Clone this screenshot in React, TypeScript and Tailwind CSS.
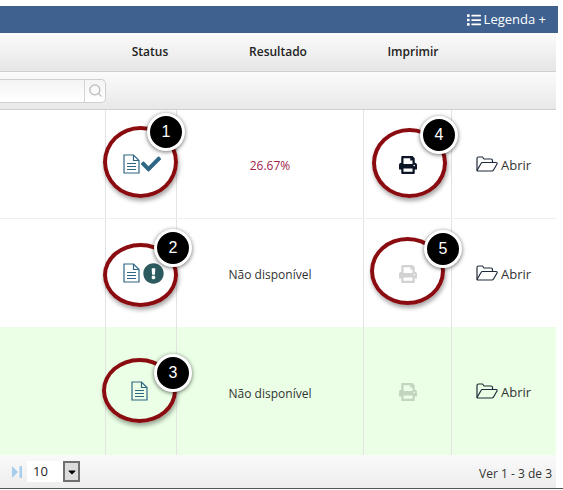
import { FaCheck, FaExclamationCircle, FaList, FaPrint, FaCaretDown } from 'react-icons/fa'
import { Search } from 'lucide-react'

function DocIcon({ className }: { className?: string }) {
  return (
    <svg viewBox="0 0 17 20" className={className} fill="none" stroke="currentColor" strokeWidth="1.2">
      <path d="M1 1h9.5L16 6.5V19H1z" />
      <path d="M10.5 1v5.5H16" />
      <path d="M4 9.5h9M4 12.5h9M4 15.5h9" />
    </svg>
  )
}

function FolderIcon({ className }: { className?: string }) {
  return (
    <svg viewBox="0 0 22 16" className={className} fill="none" stroke="currentColor" strokeWidth="1.2" strokeLinejoin="round">
      <path d="M1 14.5V2.5Q1 1 2.5 1h4l1.5 2h7Q16.5 3 16.5 4.5V6.5" />
      <path d="M1 14.5L5 7.5Q5.5 6.5 6.5 6.5H20Q21.5 6.5 21 8L17.5 14Q17 15 16 15H1.5z" />
    </svg>
  )
}

function Ring({ className }: { className: string }) {
  return (
    <div
      className={`absolute rounded-[50%] border-[4px] border-[#8a0c10] shadow-[1px_3px_4px_rgba(0,0,0,0.35)] ${className}`}
    />
  )
}

function Badge({ n, className }: { n: number; className: string }) {
  return (
    <div
      className={`absolute flex h-[38px] w-[38px] items-center justify-center rounded-full border-[3px] border-white bg-black font-['Liberation_Sans',sans-serif] text-[16px] text-white shadow-[0_1px_4px_rgba(0,0,0,0.6)] ${className}`}
    >
      {n}
    </div>
  )
}

function Row({
  status,
  result,
  printClass,
  className,
  resultClass = 'pt-[3px]',
}: {
  status: React.ReactNode
  result: React.ReactNode
  printClass: string
  className: string
  resultClass?: string
}) {
  return (
    <div className={`grid grid-cols-[105px_72px_186px_89px_1fr] ${className}`}>
      <div />
      <div className="flex items-center border-x border-[#e3e3e3] pl-[17px]">{status}</div>
      <div className={`flex items-center justify-center ${resultClass}`}>{result}</div>
      <div className="flex items-center justify-center border-x border-[#e3e3e3] pt-[2px]">
        <FaPrint className={`text-[18px] ${printClass}`} />
      </div>
      <div className="flex items-center gap-[3px] pl-[24px] text-[13px] text-[#333]">
        <FolderIcon className="h-[16px] w-[22px] text-[#1f2a3a]" />
        <span className="mt-[4px]">Abrir</span>
      </div>
    </div>
  )
}

export default function App() {
  return (
    <div className="relative h-[490px] w-[563px] overflow-hidden bg-white pt-[6px] font-['Open_Sans',sans-serif] text-[12px]">
      <div className="flex h-[27px] w-[558px] items-center justify-end bg-[#3e618f] pr-[12px] text-[13px] text-white">
        <FaList className="mr-[3px] text-[14px]" />
        <span className="mt-[1px]">Legenda +</span>
      </div>

      <div className="w-[556px]">
        <div className="grid h-[39px] grid-cols-[115px_70px_186px_84px_1fr] items-center border-b border-[#cfcfcf] bg-gradient-to-b from-[#fbfbfb] to-[#e6e6e6] font-semibold text-[#222]">
          <div />
          <div className="text-center">Status</div>
          <div className="text-center">Resultado</div>
          <div className="text-center">Imprimir</div>
          <div />
        </div>

        <div className="flex h-[38px] items-center border-b border-[#cfcfcf] bg-gradient-to-b from-[#fbfbfb] to-[#e8e8e8]">
          <div className="flex h-[24px] w-[106px] items-center justify-end rounded-r-[5px] border border-l-0 border-[#cfcfcf] bg-gradient-to-b from-[#f4f4f4] to-white">
            <div className="flex h-full w-[21px] items-center justify-center border-l border-[#d5d5d5]">
              <Search size={15} strokeWidth={2} className="text-[#b5b9bc]" />
            </div>
          </div>
        </div>

        <Row
          className="h-[109px] border-b border-[#efefef] bg-white"
          status={
            <div className="flex items-center text-[#2f6684]">
              <DocIcon className="h-[20px] w-[17px]" />
              <FaCheck className="ml-[1px] text-[20px]" />
            </div>
          }
          result={<span className="text-[#a3234a]">26.67%</span>}
          printClass="text-[#0c1526]"
        />
        <Row
          className="h-[108px] bg-white"
          status={
            <div className="flex items-center gap-[3px] text-[#2f6684]">
              <DocIcon className="h-[20px] w-[17px]" />
              <FaExclamationCircle className="mt-[1px] text-[21px] text-[#2c5a5f]" />
            </div>
          }
          result={<span className="text-[#333]">Não disponível</span>}
          printClass="text-[#d2d2d2]"
        />
        <Row
          className="h-[128px] bg-[#eaffe5]"
          status={
            <div className="pl-[8px] text-[#2f6684]">
              <DocIcon className="h-[20px] w-[17px]" />
            </div>
          }
          result={<span className="text-[#333]">Não disponível</span>}
          resultClass="pt-[5px]"
          printClass="text-[#c3d4c0]"
        />

        <div className="flex h-[33px] items-center justify-between bg-gradient-to-b from-[#fafafa] to-[#ededed] pl-[12px] pr-[4px]">
          <div className="flex items-center gap-[5px]">
            <svg viewBox="0 0 10 12" className="h-[12px] w-[10px] text-[#a9cdec]" fill="currentColor">
              <path d="M0 0l6 6-6 6zM7.5 0H10v12H7.5z" />
            </svg>
            <div className="flex h-[21px] w-[53px] items-center justify-between bg-white pl-[6px]">
              <span className="text-[13px] text-[#222]">10</span>
              <div className="flex h-full w-[17px] items-center justify-center border-2 border-[#6f6f6f] bg-[#dcdcdc]">
                <FaCaretDown className="text-[12px] text-black" />
              </div>
            </div>
          </div>
          <span className="mt-[5px] text-[#333]">Ver 1 - 3 de 3</span>
        </div>
      </div>
      <div className="h-px w-[563px] bg-[#555]" />

      <Ring className="left-[103px] top-[126px] h-[72px] w-[75px]" />
      <Ring className="left-[103px] top-[243px] h-[64px] w-[75px]" />
      <Ring className="left-[102px] top-[358px] h-[65px] w-[75px]" />
      <Ring className="left-[372px] top-[128px] h-[70px] w-[75px]" />
      <Ring className="left-[370px] top-[237px] h-[68px] w-[75px]" />

      <Badge n={1} className="left-[147px] top-[113px]" />
      <Badge n={2} className="left-[154px] top-[229px]" />
      <Badge n={3} className="left-[154px] top-[354px]" />
      <Badge n={4} className="left-[420px] top-[116px]" />
      <Badge n={5} className="left-[424px] top-[230px]" />
    </div>
  )
}
